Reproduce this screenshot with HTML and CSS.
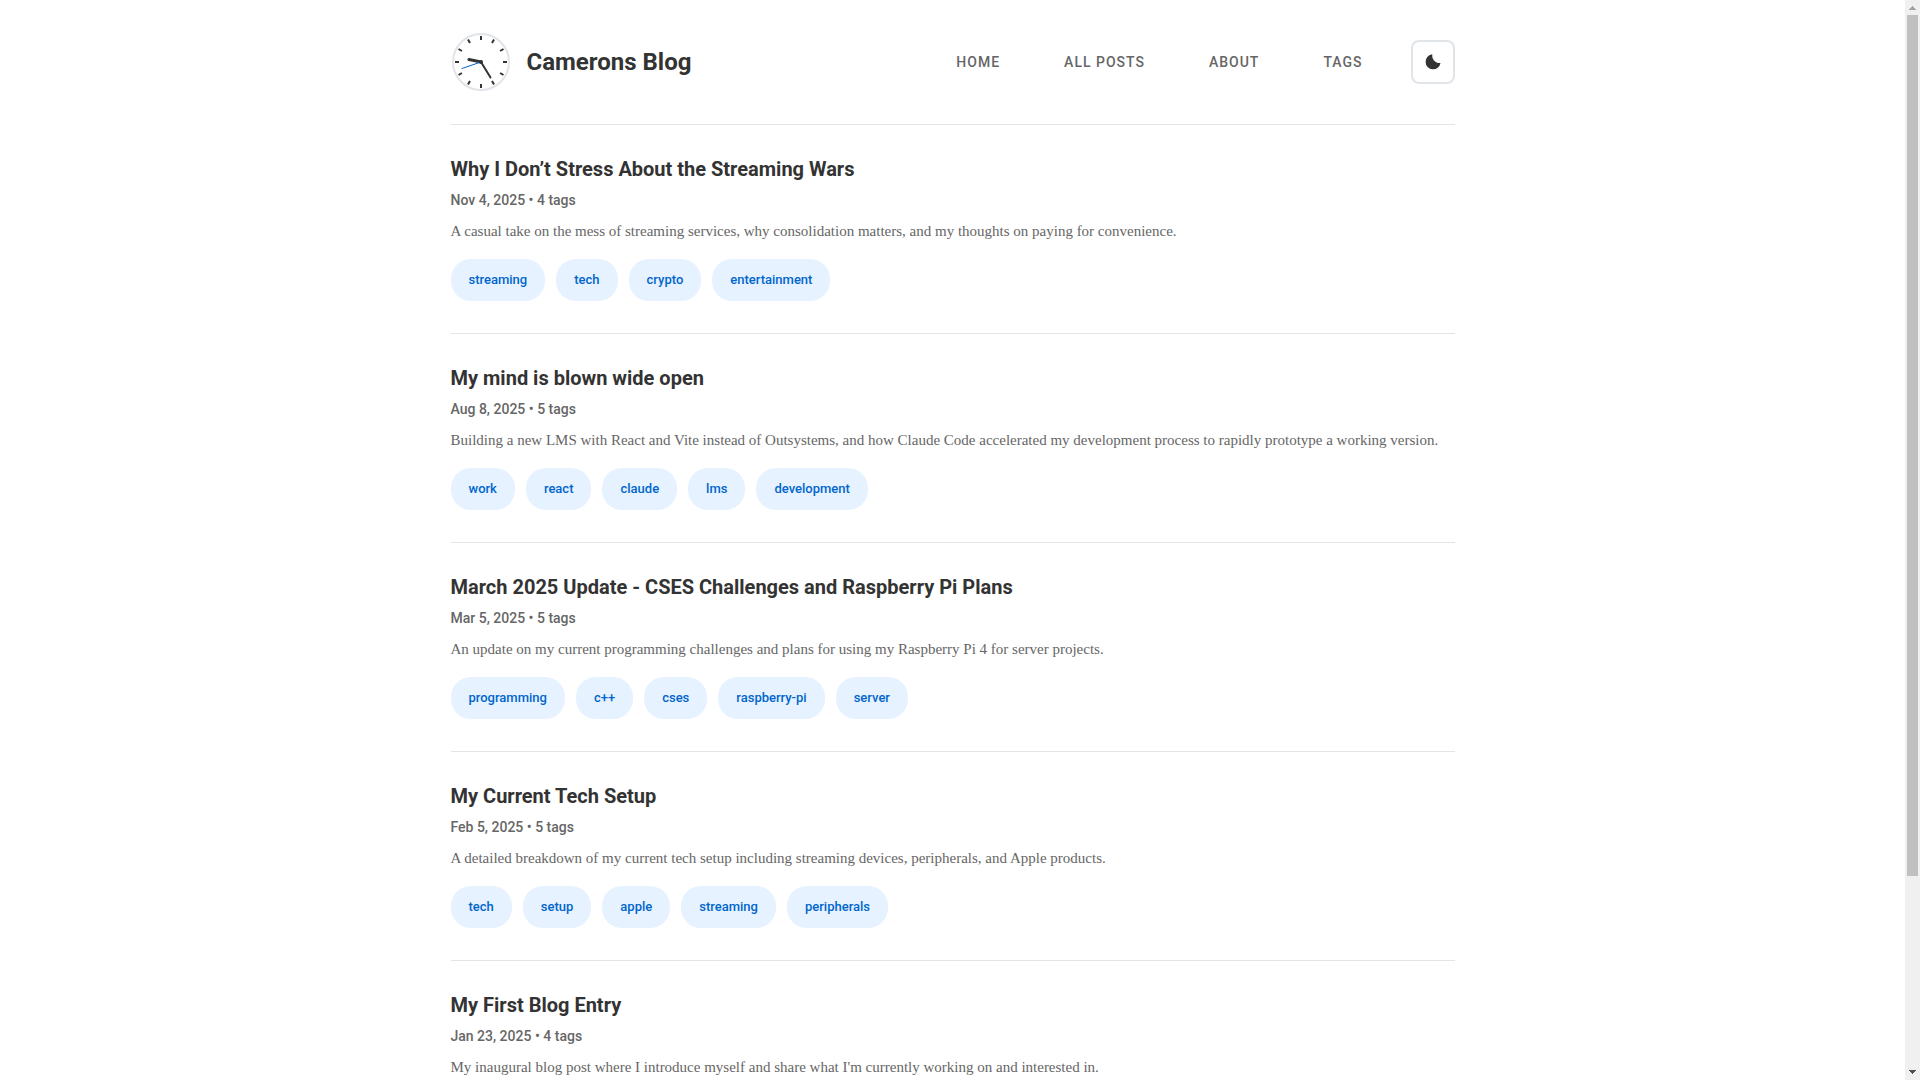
FILE: index.html
```html
<!DOCTYPE html>
<html lang="en">
<head>
<meta charset="utf-8">
<meta name="viewport" content="width=device-width, initial-scale=1">
<title>Camerons Blog</title>
<link rel="stylesheet" href="styles.css">
</head>
<body>
<div class="scroll-area">
<div class="page">
  <header class="site-header">
    <a class="brand" href="#">
      <svg class="clock" viewBox="0 0 60 60" aria-hidden="true">
        <circle cx="30" cy="30" r="28" fill="#fff" stroke="#e1e4e8" stroke-width="2"/>
        <g stroke="#333" stroke-width="2">
          <path id="tick" d="M30 4v4"/>
          <use href="#tick" transform="rotate(30 30 30)"/>
          <use href="#tick" transform="rotate(60 30 30)"/>
          <use href="#tick" transform="rotate(90 30 30)"/>
          <use href="#tick" transform="rotate(120 30 30)"/>
          <use href="#tick" transform="rotate(150 30 30)"/>
          <use href="#tick" transform="rotate(180 30 30)"/>
          <use href="#tick" transform="rotate(210 30 30)"/>
          <use href="#tick" transform="rotate(240 30 30)"/>
          <use href="#tick" transform="rotate(270 30 30)"/>
          <use href="#tick" transform="rotate(300 30 30)"/>
          <use href="#tick" transform="rotate(330 30 30)"/>
        </g>
        <path d="M30 30L18 27.500" stroke="#333" stroke-width="3" stroke-linecap="round"/>
        <path d="M30 30L39.500 45.500" stroke="#333" stroke-width="2" stroke-linecap="round"/>
        <path d="M30 30L11 36.500" stroke="#0066cc" stroke-width="1" stroke-linecap="round"/>
        <circle cx="30" cy="30" r="2" fill="#333"/>
      </svg>
      <span class="brand-name">Camerons Blog</span>
    </a>
    <div class="header-actions">
      <nav class="site-nav">
        <a href="#">Home</a>
        <a href="#">All Posts</a>
        <a href="#">About</a>
        <a href="#">Tags</a>
      </nav>
      <button class="theme-toggle" type="button" aria-label="Switch to dark theme">
        <svg viewBox="0 0 54 54" width="18" height="18" aria-hidden="true"><path fill="#333" d="M25 4A22.500 22.500 0 1 0 49.500 30A22 22 0 0 1 25 4z"/></svg>
      </button>
    </div>
  </header>
  <main>
    <article class="post">
      <h2><a href="#">Why I Don’t Stress About the Streaming Wars</a></h2>
      <p class="meta">Nov 4, 2025 • 4 tags</p>
      <p class="excerpt">A casual take on the mess of streaming services, why consolidation matters, and my thoughts on paying for convenience.</p>
      <div class="tags"><a href="#">streaming</a><a href="#">tech</a><a href="#">crypto</a><a href="#">entertainment</a></div>
    </article>
    <article class="post">
      <h2><a href="#">My mind is blown wide open</a></h2>
      <p class="meta">Aug 8, 2025 • 5 tags</p>
      <p class="excerpt">Building a new LMS with React and Vite instead of Outsystems, and how Claude Code accelerated my development process to rapidly prototype a working version.</p>
      <div class="tags"><a href="#">work</a><a href="#">react</a><a href="#">claude</a><a href="#">lms</a><a href="#">development</a></div>
    </article>
    <article class="post">
      <h2><a href="#">March 2025 Update - CSES Challenges and Raspberry Pi Plans</a></h2>
      <p class="meta">Mar 5, 2025 • 5 tags</p>
      <p class="excerpt">An update on my current programming challenges and plans for using my Raspberry Pi 4 for server projects.</p>
      <div class="tags"><a href="#">programming</a><a href="#">c++</a><a href="#">cses</a><a href="#">raspberry-pi</a><a href="#">server</a></div>
    </article>
    <article class="post">
      <h2><a href="#">My Current Tech Setup</a></h2>
      <p class="meta">Feb 5, 2025 • 5 tags</p>
      <p class="excerpt">A detailed breakdown of my current tech setup including streaming devices, peripherals, and Apple products.</p>
      <div class="tags"><a href="#">tech</a><a href="#">setup</a><a href="#">apple</a><a href="#">streaming</a><a href="#">peripherals</a></div>
    </article>
    <article class="post">
      <h2><a href="#">My First Blog Entry</a></h2>
      <p class="meta">Jan 23, 2025 • 4 tags</p>
      <p class="excerpt">My inaugural blog post where I introduce myself and share what I'm currently working on and interested in.</p>
    </article>
  </main>
</div>
</div>
<div class="scrollbar" aria-hidden="true">
  <svg class="arrow" viewBox="0 0 11 15"><path fill="#a3a3a3" d="M2 10h7v-1h-1v-1h-1v-1h-1v-1h-1v1h-1v1h-1v1h-1z"/></svg>
  <div class="track"><div class="thumb"></div></div>
  <svg class="arrow" viewBox="0 0 11 15"><path fill="#505050" d="M2 5h7v1h-1v1h-1v1h-1v1h-1v-1h-1v-1h-1v-1h-1z"/></svg>
</div>
</body>
</html>
```
FILE: styles.css
```css
* {
  box-sizing: border-box;
}

body {
  display: flex;
  height: 100vh;
  margin: 0;
  background: #fff;
  color: #333;
  font-family: Roboto, "Liberation Sans", sans-serif;
}

a {
  color: inherit;
  text-decoration: none;
}

.scroll-area {
  flex: 1;
  overflow-y: auto;
  scrollbar-width: none;
}

.scrollbar {
  display: flex;
  flex-direction: column;
  width: 15px;
  padding: 0 2px;
  background: #f0f0f0;
}

.arrow {
  width: 11px;
  height: 15px;
}

.track {
  flex: 1;
}

.thumb {
  height: 82%;
  background: #c0c0c0;
}

.page {
  max-width: 1100px;
  margin: 0 auto;
  padding: 0 48px;
}

.site-header {
  display: flex;
  align-items: center;
  justify-content: space-between;
  padding: 32px 0;
  border-bottom: 1px solid #e1e4e8;
}

.brand {
  display: flex;
  align-items: center;
  gap: 16px;
}

.clock {
  width: 60px;
  height: 60px;
}

.brand-name {
  font-size: 24px;
  font-weight: 700;
}

.header-actions {
  display: flex;
  align-items: center;
  gap: 48px;
}

.site-nav {
  display: flex;
  gap: 64px;
  color: #666;
  font-size: 14px;
  font-weight: 500;
  letter-spacing: 1px;
  text-transform: uppercase;
}

.theme-toggle {
  display: flex;
  align-items: center;
  justify-content: center;
  width: 44px;
  height: 44px;
  padding: 0;
  border: 2px solid #e1e4e8;
  border-radius: 8px;
  background: #fff;
}

.post {
  padding: 32px 0;
  border-bottom: 1px solid #e1e4e8;
}

.post:last-child {
  padding-bottom: 0;
  border-bottom: 0;
}

.post h2 {
  margin: 0 0 8px;
  font-size: 20px;
  font-weight: 700;
  line-height: 24px;
}

.meta {
  margin: 0 0 8px;
  color: #666;
  font-size: 14px;
  font-weight: 500;
  line-height: 22px;
}

.excerpt {
  margin: 0 0 16px;
  color: #666;
  font-family: "Liberation Serif", serif;
  font-size: 15px;
  line-height: 24px;
}

.tags {
  display: flex;
  flex-wrap: wrap;
  gap: 11px;
}

.tags a {
  padding: 10px 18px;
  border-radius: 20px;
  background: #e6f2ff;
  color: #0066cc;
  font-size: 13px;
  font-weight: 500;
  line-height: 22px;
}
```
